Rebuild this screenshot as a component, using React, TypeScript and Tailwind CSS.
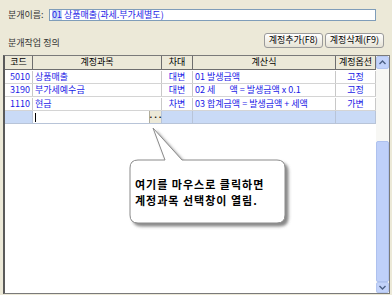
import React from 'react';

interface Row {
  code: string;
  name: string;
  dc: string;
  formula: string;
  opt: string;
}

const rows: Row[] = [
  { code: '5010', name: '상품매출', dc: '대변', formula: '01 발생금액', opt: '고정' },
  { code: '3190', name: '부가세예수금', dc: '대변', formula: '02 세       액 = 발생금액 x 0.1', opt: '고정' },
  { code: '1110', name: '현금', dc: '차변', formula: '03 합계금액 = 발생금액 + 세액', opt: '가변' },
];

const XpButton: React.FC<{ label: string }> = ({ label }) => (
  <button className="h-[15px] px-[4px] rounded-[3px] border border-[#9a9a9a] bg-gradient-to-b from-white to-[#e6e3d6] text-[9px] leading-[12px] text-black">
    {label}
  </button>
);

const Callout: React.FC = () => (
  <div className="absolute left-[125px] top-[124px] w-[172px] h-[108px]">
    <svg width="172" height="108" viewBox="0 0 172 108">
      <defs>
        <filter id="sh" x="-10%" y="-10%" width="130%" height="130%">
          <feDropShadow dx="3" dy="3" stdDeviation="1.5" floodColor="#555" floodOpacity="0.7" />
        </filter>
      </defs>
      <path
        d="M13 36 L40 36 L28 4 L57 36 L152 36 Q160 36 160 44 L160 91 Q160 99 152 99 L13 99 Q5 99 5 91 L5 44 Q5 36 13 36 Z"
        fill="white"
        stroke="#8a8a8a"
        strokeWidth="1"
        filter="url(#sh)"
      />
    </svg>
    <div className="absolute left-[10px] top-[52px] text-[11px] leading-[16px] tracking-[1px] font-semibold text-black whitespace-nowrap">
      <div>여기를 마우스로 클릭하면</div>
      <div>계정과목 선택창이 열림.</div>
    </div>
  </div>
);

export default function App() {
  const cell = 'border-r border-[#c8c8c8] px-[2px] whitespace-pre overflow-hidden';
  return (
    <div className="relative w-[392px] h-[295px] bg-[#ECE9D8] overflow-hidden font-['Noto_Sans_CJK_KR','Noto_Sans',sans-serif] text-[9px] leading-[12px]">
      {/* 분개이름 */}
      <div className="flex items-center pt-[9px] pl-[8px]">
        <span className="w-[41px] text-[#333]">분개이름:</span>
        <div className="w-[327px] h-[12px] bg-white border border-[#7F9DB9] flex items-center pl-[2px] text-[#1a1ae6] leading-[10px]">
          <span className="bg-[#c9d9f7]">01</span>
          <span>&nbsp;상품매출(과세.부가세별도)</span>
        </div>
      </div>

      {/* 분개작업 정의 + buttons */}
      <div className="flex items-center mt-[10px] pl-[8px] pr-[8px]">
        <span className="pt-[6px] text-[#333]">분개작업 정의</span>
        <div className="ml-auto flex gap-[2px]">
          <XpButton label="계정추가(F8)" />
          <XpButton label="계정삭제(F9)" />
        </div>
      </div>

      {/* grid */}
      <div className="mt-[6px] ml-[3px] w-[387px] h-[239px] border border-[#7a7a7a] border-l-[2px] border-l-[#5a5a5a] bg-white flex">
        <div className="flex-1 flex flex-col">
          <div className="flex h-[14px] bg-[#ECE9D8] border-b border-[#6e6e6e] text-black">
            <div className="w-[28px] text-center border-r border-[#6e6e6e]">코드</div>
            <div className="w-[129px] text-center border-r border-[#6e6e6e]">계정과목</div>
            <div className="w-[31px] text-center border-r border-[#6e6e6e]">차대</div>
            <div className="w-[143px] text-center border-r border-[#6e6e6e]">계산식</div>
            <div className="flex-1 text-center border-r border-[#6e6e6e]">계정옵션</div>
          </div>
          {rows.map((r, i) => (
            <div
              key={r.code}
              className={`flex ${i === 1 ? 'h-[13px]' : 'h-[14px]'} items-center border-b border-[#d4d4d4] text-[#1a1ae6]`}
            >
              <div className={`w-[28px] text-right ${cell}`}>{r.code}</div>
              <div className={`w-[129px] ${cell}`}>{r.name}</div>
              <div className={`w-[31px] text-center ${cell}`}>{r.dc}</div>
              <div className={`w-[143px] ${cell}`}>{r.formula}</div>
              <div className={`flex-1 text-center ${cell}`}>{r.opt}</div>
            </div>
          ))}
          {/* edit row */}
          <div className="flex h-[13px] bg-[#C9DAF6] border-b border-[#b8c4d8]">
            <div className="w-[28px] border-r border-[#b8c4d8]" />
            <div className="w-[129px] flex border-r border-[#b8c4d8]">
              <div className="flex-1 bg-white flex items-center pl-[2px]">
                <span className="w-px h-[9px] bg-black" />
              </div>
              <div className="w-[12px] bg-[#ECE9D8] border-l border-[#b0ad9c] flex items-center justify-center text-[8px] font-bold leading-none text-black">
                ···
              </div>
            </div>
            <div className="w-[31px] border-r border-[#b8c4d8]" />
            <div className="w-[143px] border-r border-[#b8c4d8]" />
            <div className="flex-1 border-r border-[#b8c4d8]" />
          </div>
        </div>

        {/* scrollbar */}
        <div className="w-[13px] flex flex-col bg-[#F7F7F4]">
          <div className="h-[13px] bg-[#C3D3FA] border border-[#b4c6f0] rounded-[2px] flex items-center justify-center">
            <svg width="7" height="5" viewBox="0 0 7 5">
              <path d="M0.5 4 L3.5 1 L6.5 4" fill="none" stroke="#4d6185" strokeWidth="1.4" />
            </svg>
          </div>
          <div className="h-[72px]" />
          <div className="flex-1 bg-[#BFD0F9] border border-[#aec1ee] rounded-[2px]" />
          <div className="h-[11px] bg-[#C3D3FA] border border-[#b4c6f0] rounded-[2px] flex items-center justify-center">
            <svg width="7" height="5" viewBox="0 0 7 5">
              <path d="M0.5 1 L3.5 4 L6.5 1" fill="none" stroke="#4d6185" strokeWidth="1.4" />
            </svg>
          </div>
        </div>
      </div>

      <Callout />
    </div>
  );
}
